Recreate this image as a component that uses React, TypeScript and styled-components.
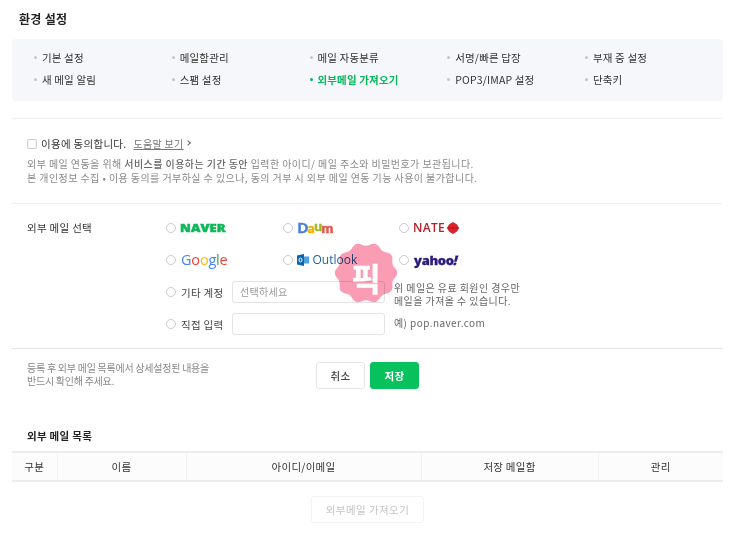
import React from 'react';
import styled, { createGlobalStyle } from 'styled-components';

const GlobalStyle = createGlobalStyle`
  html, body {
    margin: 0;
    padding: 0;
    background: #fff;
  }
  body {
    font-family: "Noto Sans CJK KR", "Noto Sans", sans-serif;
    color: #333;
    font-size: 11px;
  }
  * {
    box-sizing: border-box;
  }
`;

const Page = styled.div`
  position: relative;
  width: 730px;
  height: 547px;
  padding: 10px 7px 0 12px;
  overflow: hidden;
`;

const PageTitle = styled.h2`
  margin: 0 0 0 7px;
  height: 29px;
  font-size: 12px;
  line-height: 17px;
  font-weight: 700;
  color: #222;
  letter-spacing: 0.3px;
`;

const NavPanel = styled.ul`
  display: grid;
  grid-template-columns: repeat(5, 137.75px);
  grid-auto-rows: 22px;
  align-content: start;
  height: 62px;
  margin: 0;
  padding: 7px 0 0 22px;
  list-style: none;
  background: #f6f7fa;
  border-radius: 4px;
`;

const NavItem = styled.li<{ $active?: boolean }>`
  display: flex;
  align-items: center;
  gap: 5px;
  font-size: 10.5px;
  letter-spacing: 0.15px;
  color: ${p => (p.$active ? '#07b85a' : '#333')};
  font-weight: ${p => (p.$active ? 700 : 400)};

  &::before {
    content: '';
    width: 3px;
    height: 3px;
    border-radius: 50%;
    background: ${p => (p.$active ? '#07b85a' : '#c4c6ca')};
  }
`;

const Section = styled.section<{ $height: number; $strong?: boolean }>`
  height: ${p => p.$height}px;
  border-top: 1px solid ${p => (p.$strong ? '#e4e4e4' : '#f1f1f1')};
`;

const AgreeSection = styled(Section)`
  margin-top: 17px;
  padding: 16px 0 0 15px;
`;

const AgreeRow = styled.div`
  display: flex;
  align-items: center;
  height: 16px;
  font-size: 10.5px;
  letter-spacing: 0.3px;
  color: #333;
`;

const CheckBox = styled.span`
  width: 10px;
  height: 10px;
  margin: 1px 4px 0 0;
  border: 1px solid #ccc;
  border-radius: 2px;
  background: #fff;
`;

const HelpLink = styled.a`
  margin-left: 7px;
  color: #777;
  text-decoration: underline;
  font-size: 10px;
`;

const Chevron = styled.span`
  width: 4px;
  height: 4px;
  margin-left: 2px;
  border-top: 1px solid #666;
  border-right: 1px solid #666;
  transform: rotate(45deg);
`;

const Notice = styled.p`
  margin: 6px 0 0;
  font-size: 10px;
  line-height: 14px;
  color: #8a8a8a;
  letter-spacing: 0.43px;

  b {
    font-weight: 500;
    color: #666;
  }
`;

const FormSection = styled(Section)`
  display: grid;
  grid-template-columns: 139px 1fr;
  padding: 16px 0 0 15px;
`;

const FieldLabel = styled.div`
  font-size: 10.5px;
  line-height: 16px;
  color: #333;
  letter-spacing: 0.3px;
`;

const ProviderGrid = styled.div`
  display: grid;
  grid-template-columns: repeat(3, 116.5px);
  grid-auto-rows: 32px;
  margin-bottom: -8px;
`;

const Provider = styled.label`
  display: flex;
  align-items: center;
  height: 16px;
  gap: 4px;
`;

const Radio = styled.span`
  flex: none;
  width: 10px;
  height: 10px;
  border: 1px solid #ccc;
  border-radius: 50%;
  background: #fff;
`;

const LogoText = styled.span<{ $color?: string; $font?: string; $size: number; $weight?: number }>`
  font-family: ${p => p.$font || '"Liberation Sans"'}, sans-serif;
  font-size: ${p => p.$size}px;
  font-weight: ${p => p.$weight || 700};
  color: ${p => p.$color || '#333'};
  line-height: 16px;
  white-space: nowrap;
`;

const NaverLogo = styled(LogoText)`
  letter-spacing: 0.1px;
  -webkit-text-stroke: 0.5px #0fb85a;
  transform: scaleX(1.18);
  transform-origin: left center;
`;

const DaumLogo = styled(LogoText)`
  display: inline-flex;
  margin-left: 1px;
  letter-spacing: -0.6px;
  -webkit-text-stroke: 0.5px currentColor;

  i {
    font-style: normal;
  }
  i:nth-child(3) {
    transform: translateY(-2px);
  }
`;

const GoogleLogo = styled(LogoText)`
  display: inline-flex;
  margin-left: 1px;
  letter-spacing: -0.2px;

  i {
    font-style: normal;
  }
`;

const NateLogo = styled(LogoText)`
  margin-right: -2px;
  letter-spacing: 0.3px;
`;

const YahooLogo = styled(LogoText)`
  margin-left: 1px;
  letter-spacing: -0.3px;
  -webkit-text-stroke: 0.3px #2c1a7d;

  i {
    display: inline-block;
    transform: skewX(-14deg);
    font-style: normal;
  }
`;

const ExtraRow = styled.div`
  display: grid;
  grid-template-columns: 66px 153px 1fr;
  align-items: center;
  height: 32px;
`;

const ExtraLabel = styled.label`
  display: flex;
  align-items: center;
  gap: 5px;
  font-size: 10.5px;
  letter-spacing: 0.3px;
  color: #444;
`;

const TextField = styled.div`
  height: 22px;
  padding: 0 7px;
  border: 1px solid #e3e3e3;
  border-radius: 3px;
  background: #fff;
  font-size: 10px;
  line-height: 20px;
  color: #999;
  letter-spacing: 0.3px;
`;

const SideNote = styled.div`
  padding-left: 9px;
  font-size: 10px;
  line-height: 13px;
  color: #666;
  letter-spacing: 0.42px;
  white-space: nowrap;
`;

const PaidNote = styled(SideNote)`
  padding-top: 3px;
`;

const ExampleNote = styled(SideNote)`
  padding-bottom: 3px;
`;

const FooterSection = styled(Section)`
  display: flex;
  padding: 13px 0 0 15px;
`;

const FooterNote = styled.p`
  width: 289px;
  margin: -1px 0 0;
  font-size: 10px;
  line-height: 13px;
  color: #888;
  letter-spacing: -0.25px;
`;

const Button = styled.button<{ $primary?: boolean }>`
  width: 49px;
  height: 27px;
  margin-right: 5px;
  padding: 0;
  font-family: inherit;
  font-size: 10.5px;
  font-weight: ${p => (p.$primary ? 700 : 500)};
  letter-spacing: 0.3px;
  color: ${p => (p.$primary ? '#fff' : '#444')};
  background: ${p => (p.$primary ? '#07c25c' : '#fff')};
  border: 1px solid ${p => (p.$primary ? '#07c25c' : '#e6e6e6')};
  border-radius: 3px;
`;

const ListTitle = styled.h3`
  margin: 1px 0 0 15px;
  height: 23px;
  font-size: 10.5px;
  line-height: 16px;
  font-weight: 700;
  color: #222;
  letter-spacing: 0.3px;
`;

const ListTable = styled.table`
  width: 711px;
  table-layout: fixed;
  border-collapse: collapse;
  border-top: 2px solid #ececec;
  border-bottom: 2px solid #ececec;
`;

const HeadCell = styled.th<{ $width: number }>`
  width: ${p => p.$width}px;
  height: 29px;
  padding: 0;
  background: #fcfcfc;
  border-left: 1px solid #f1f1f1;
  font-size: 10.5px;
  font-weight: 400;
  letter-spacing: 0.25px;
  color: #333;

  &:first-child {
    border-left: 0;
  }
`;

const ImportRow = styled.div`
  display: flex;
  justify-content: center;
  margin-top: 14px;
`;

const ImportButton = styled.button`
  width: 113px;
  height: 27px;
  padding: 0;
  background: #fff;
  border: 1px solid #f3f3f3;
  border-radius: 3px;
  font-family: inherit;
  font-size: 10.5px;
  letter-spacing: 0.45px;
  color: #c4c4c4;
`;

const Sticker = styled.div`
  position: absolute;
  left: 335px;
  top: 243px;
  width: 62px;
  height: 60px;
  display: flex;
  align-items: center;
  justify-content: center;
  padding-top: 7px;

  svg {
    position: absolute;
    inset: 0;
    mix-blend-mode: multiply;
  }

  span {
    position: relative;
    font-size: 32px;
    font-weight: 700;
    color: #fff;
    line-height: 1;
    -webkit-text-stroke: 0.4px #fff;
  }
`;

// scalloped badge outline around the centre of the sticker
const stickerPath = (() => {
  const points: string[] = [];
  for (let i = 0; i < 120; i++) {
    const a = (i / 120) * Math.PI * 2;
    const r = 28.8 + 1.6 * Math.cos(a * 10);
    points.push(`${(31 + r * Math.cos(a) * 1.03).toFixed(1)},${(30 + r * Math.sin(a)).toFixed(1)}`);
  }
  return points.join(' ');
})();

const navItems = [
  '기본 설정', '메일함관리', '메일 자동분류', '서명/빠른 답장', '부재 중 설정',
  '새 메일 알림', '스팸 설정', '외부메일 가져오기', 'POP3/IMAP 설정', '단축키',
];

const daumLetters: [string, string][] = [['D', '#4a7fd8'], ['a', '#eeb400'], ['u', '#9dbb1e'], ['m', '#e2574c']];
const googleLetters: [string, string][] = [['G', '#4285f4'], ['o', '#ea4335'], ['o', '#fbbc05'], ['g', '#4285f4'], ['l', '#34a853'], ['e', '#ea4335']];

const columns: [string, number][] = [['구분', 45], ['이름', 129], ['아이디/이메일', 235], ['저장 메일함', 177], ['관리', 125]];

const OutlookIcon = () => (
  <svg width="12" height="12" viewBox="0 0 12 12">
    <rect x="5" y="2.5" width="7" height="7" fill="#4ba3e3" />
    <path d="M0 1.5 7 0v12L0 10.5z" fill="#0a64b0" />
    <ellipse cx="3.5" cy="6" rx="1.5" ry="2" fill="none" stroke="#fff" strokeWidth="1" />
  </svg>
);

const NateIcon = () => (
  <svg width="12" height="12" viewBox="0 0 12 12">
    <path d="M6 0 10 2.4 12 6 10 9.6 6 12 2 9.6 0 6 2 2.4z" fill="#d9232e" />
    <path d="M0 6h12" stroke="#b5121c" strokeWidth="0.8" />
  </svg>
);

export default function App() {
  return (
    <Page>
      <GlobalStyle />
      <PageTitle>환경 설정</PageTitle>
      <NavPanel>
        {navItems.map(item => (
          <NavItem key={item} $active={item === '외부메일 가져오기'}>{item}</NavItem>
        ))}
      </NavPanel>

      <AgreeSection $height={85}>
        <AgreeRow>
          <CheckBox />
          이용에 동의합니다.
          <HelpLink>도움말 보기</HelpLink>
          <Chevron />
        </AgreeRow>
        <Notice>
          외부 메일 연동을 위해 <b>서비스를 이용하는 기간 동안</b> 입력한 아이디/ 메일 주소와 비밀번호가 보관됩니다.
          <br />
          본 개인정보 수집 • 이용 동의를 거부하실 수 있으나, 동의 거부 시 외부 메일 연동 기능 사용이 불가합니다.
        </Notice>
      </AgreeSection>

      <FormSection $height={145}>
        <FieldLabel>외부 메일 선택</FieldLabel>
        <div>
          <ProviderGrid>
            <Provider><Radio /><NaverLogo $size={11} $color="#0fb85a" $font='"Open Sans"' $weight={800}>NAVER</NaverLogo></Provider>
            <Provider>
              <Radio />
              <DaumLogo $size={14} $font='"Lato"' $weight={900}>
                {daumLetters.map(([l, c]) => <i key={l} style={{ color: c }}>{l}</i>)}
              </DaumLogo>
            </Provider>
            <Provider>
              <Radio />
              <NateLogo $size={12} $color="#b5202a" $font='"Open Sans"' $weight={600}>NATE</NateLogo>
              <NateIcon />
            </Provider>
            <Provider>
              <Radio />
              <GoogleLogo $size={14.5} $weight={400} $font='"Open Sans"'>
                {googleLetters.map(([l, c], i) => <i key={i} style={{ color: c }}>{l}</i>)}
              </GoogleLogo>
            </Provider>
            <Provider>
              <Radio />
              <OutlookIcon />
              <LogoText $size={12} $weight={400} $color="#1f5f9e" $font='"Open Sans"'>Outlook</LogoText>
            </Provider>
            <Provider>
              <Radio />
              <YahooLogo $size={13} $weight={800} $color="#2c1a7d" $font='"Open Sans"'>yahoo<i>!</i></YahooLogo>
            </Provider>
          </ProviderGrid>
          <ExtraRow>
            <ExtraLabel><Radio />기타 계정</ExtraLabel>
            <TextField>선택하세요</TextField>
            <PaidNote>위 메일은 유료 회원인 경우만<br />메일을 가져올 수 있습니다.</PaidNote>
          </ExtraRow>
          <ExtraRow>
            <ExtraLabel><Radio />직접 입력</ExtraLabel>
            <TextField />
            <ExampleNote>예) pop.naver.com</ExampleNote>
          </ExtraRow>
        </div>
      </FormSection>

      <FooterSection $height={79} $strong>
        <FooterNote>등록 후 외부 메일 목록에서 상세설정된 내용을<br />반드시 확인해 주세요.</FooterNote>
        <Button>취소</Button>
        <Button $primary>저장</Button>
      </FooterSection>

      <ListTitle>외부 메일 목록</ListTitle>
      <ListTable>
        <thead>
          <tr>
            {columns.map(([name, width]) => <HeadCell key={name} $width={width}>{name}</HeadCell>)}
          </tr>
        </thead>
      </ListTable>
      <ImportRow>
        <ImportButton>외부메일 가져오기</ImportButton>
      </ImportRow>

      <Sticker>
        <svg width="62" height="60" viewBox="0 0 62 60">
          <polygon points={stickerPath} fill="#fa9cb3" />
        </svg>
        <span>픽</span>
      </Sticker>
    </Page>
  );
}
